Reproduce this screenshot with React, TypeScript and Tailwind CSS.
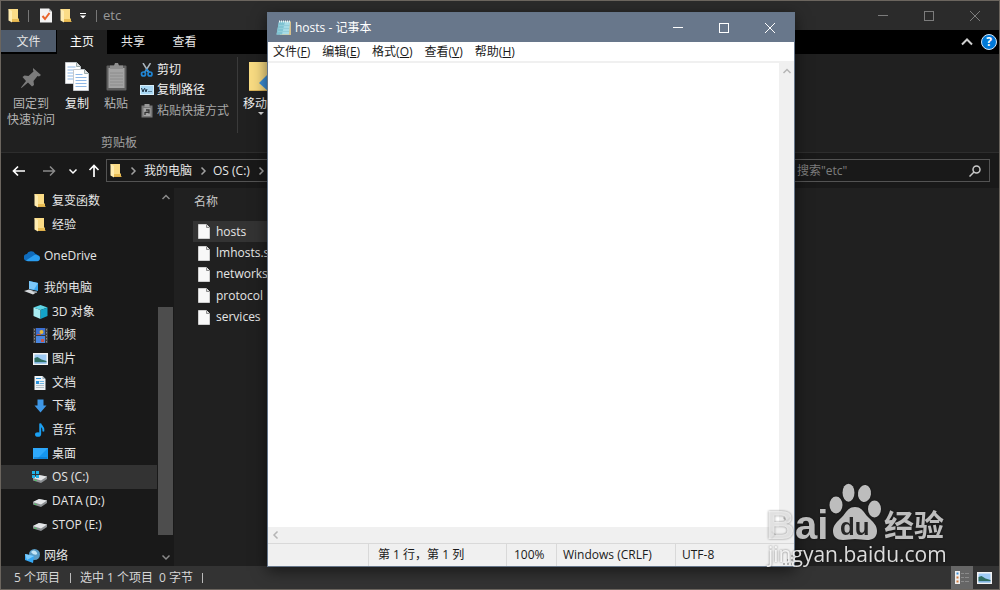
import React from 'react';

const FolderIcon = () => (
  <svg width="12" height="15" viewBox="0 0 12 15" className="shrink-0">
    <path d="M1 1h9v9l1 1v3H4z" fill="#e9bd55" />
    <path d="M0.500 1H10v10H3z" fill="#fbdc86" />
    <path d="M0.500 1L4 3v11.500L0.500 12.500z" fill="#ffecb0" />
    <path d="M4 13h7.500v1H4z" fill="#e0b04a" />
  </svg>
);

const CheckDocIcon = () => (
  <svg width="12" height="15" viewBox="0 0 12 15" className="shrink-0">
    <path d="M0 0.500h9l3 3V14.500H0z" fill="#f4f4f4" />
    <path d="M9 0.500v3h3z" fill="#b5b5b5" />
    <path d="M2.500 8l2.500 3 4.500-6" fill="none" stroke="#e8642c" strokeWidth="2" />
  </svg>
);

const FileIcon = () => (
  <svg width="12" height="15" viewBox="0 0 12 15" className="shrink-0">
    <path d="M0.500 0.500h8l3 3v11h-11z" fill="#f8f8f8" stroke="#cfcfcf" />
    <path d="M8.500 0.500v3h3" fill="#dcdcdc" stroke="#8b8b8b" />
  </svg>
);

const PinIcon = () => (
  <svg width="22" height="22" viewBox="0 0 22 22">
    <path d="M13 1l8 7-2 1.500-1.500-.5-4 5 .5 4-2 1.500-4-4L1.500 21 1 20.500 6 14 2.500 10l2-1.500 4 .5 5-4.500-.5-1.500z" fill="#7b7b7b" />
  </svg>
);

const CopyIcon = () => (
  <svg width="25" height="29" viewBox="0 0 25 29">
    <path d="M0.500 0.500h11l4 4v17h-15z" fill="#fff" stroke="#c4c8cc" />
    <path d="M11.500 0.500v4h4" fill="#ddd" stroke="#9aa" />
    <path d="M2.500 5h8M2.500 8h11M2.500 11h11M2.500 14h11M2.500 17h11" stroke="#8fb8e6" />
    <path d="M8.500 7.500h11l4 4v17h-15z" fill="#fff" stroke="#c4c8cc" />
    <path d="M19.500 7.500v4h4" fill="#ddd" stroke="#9aa" />
    <path d="M10.500 12.500h7M10.500 15.500h11M10.500 18.500h11M10.500 21.500h11M10.500 24.500h11" stroke="#8fb8e6" />
  </svg>
);

const PasteIcon = () => (
  <svg width="21" height="29" viewBox="0 0 21 29">
    <rect x="0.500" y="3.500" width="20" height="25" rx="1" fill="#5f5f5f" />
    <rect x="2.500" y="6" width="16" height="20" fill="#a3a3a3" />
    <path d="M4 11h13M4 14h13M4 17h13M4 20h13M4 23h13" stroke="#8c8c8c" />
    <path d="M4 7V3.500h4L9 1h3l1 2.500h4V7z" fill="#8d8d8d" />
  </svg>
);

const ScissorsIcon = () => (
  <svg width="14" height="14" viewBox="0 0 14 14">
    <path d="M3 0l5.500 9M10.500 0L5 9" stroke="#a9b4bd" strokeWidth="1.500" />
    <circle cx="3.500" cy="11" r="2" fill="none" stroke="#1f86d6" strokeWidth="1.700" />
    <circle cx="10" cy="11" r="2" fill="none" stroke="#1f86d6" strokeWidth="1.700" />
    <path d="M4.500 9.500L7 6.500l2.500 3" fill="none" stroke="#1f86d6" strokeWidth="1.500" />
  </svg>
);

const PathIcon = () => (
  <svg width="14" height="10" viewBox="0 0 14 10">
    <rect width="14" height="10" fill="#d6eefb" />
    <rect x="1" y="1" width="12" height="8" fill="#a9d8f5" />
    <path d="M1.500 3l1.500 4 1-3M4.500 3l1.500 4 1-3M8.500 6.500h1M10.500 6.500h1" fill="none" stroke="#1c3346" />
  </svg>
);

const ShortcutIcon = () => (
  <svg width="12" height="14" viewBox="0 0 12 14">
    <rect x="0.500" y="1.500" width="11" height="12" fill="#777" />
    <rect x="3.500" y="0" width="5" height="3" fill="#999" />
    <rect x="2.500" y="4" width="7" height="8" fill="#a5a5a5" />
    <path d="M4 11V8.500L7.500 8M5 6h3v3.500" fill="none" stroke="#333" strokeWidth="1.300" />
  </svg>
);

const MoveToIcon = () => (
  <svg width="30" height="30" viewBox="0 0 30 30">
    <rect width="30" height="29" fill="#f8db82" />
    <path d="M0 28h30v1H0z" fill="#d8b257" />
    <path d="M10 21l9-9v5h11v8H19v4z" fill="#3b8fd8" />
  </svg>
);

const CloudIcon = () => (
  <svg width="17" height="12" viewBox="0 0 17 12">
    <path d="M3.500 11A3.500 3.500 0 013 4 5 5 0 0112 3.500 3.800 3.800 0 0114 10z" fill="#0f6cbd" />
    <path d="M4 11.700l9.500-.2a3.200 3.200 0 00.500-6.400A4 4 0 0011 5L2 10.700z" fill="#2a9df0" />
  </svg>
);

const ComputerIcon = () => (
  <svg width="16" height="14" viewBox="0 0 16 14">
    <path d="M5 0l9 2v8L5 8z" fill="#3ba7f0" />
    <path d="M5 0l9 2-4 6.500L5 8z" fill="#7cc8fa" />
    <path d="M0 10l5-1.500 8 2.500-4 2.500z" fill="#d5d9dc" />
    <path d="M8 10l2 1.500 3 .5v-1.500z" fill="#8d959b" />
  </svg>
);

const CubeIcon = () => (
  <svg width="15" height="14" viewBox="0 0 15 14">
    <path d="M7.500 0l7 2.500-7 2.500-7-2.500z" fill="#5fd6e6" />
    <path d="M0.500 2.500l7 2.500v9l-7-3z" fill="#a8ecf2" />
    <path d="M14.500 2.500l-7 2.500v9l7-3z" fill="#14a3c8" />
  </svg>
);

const VideoIcon = () => (
  <svg width="15" height="15" viewBox="0 0 15 15">
    <rect width="15" height="15" fill="#3b3b3b" />
    <path d="M1.500 1v14M13.500 1v14" stroke="#8a8a8a" strokeDasharray="1.500 1.500" />
    <rect x="3" width="9" height="7" fill="#3c6fd0" />
    <rect x="3" y="8" width="9" height="7" fill="#4a86e0" />
    <circle cx="8.500" cy="4" r="2" fill="#e6b93c" />
    <path d="M4 6h4v1H4zM8 11h3v3H8z" fill="#c9584a" />
  </svg>
);

const PictureIcon = () => (
  <svg width="15" height="12" viewBox="0 0 15 12">
    <rect width="15" height="12" fill="#f2f2f2" />
    <rect x="1.500" y="1.500" width="12" height="9" fill="#9fcbf5" />
    <path d="M1.500 5l3-1 4 2.500 5 1.500v1H1.500z" fill="#2f6e62" />
    <path d="M1.500 9h12v1.500h-12z" fill="#7fb2dc" />
  </svg>
);

const DocumentIcon = () => (
  <svg width="12" height="14" viewBox="0 0 12 14">
    <path d="M0.500 0h8l3 3v11h-11z" fill="#eef3f6" />
    <path d="M8.500 0v3h3z" fill="#9fb0ba" />
    <path d="M2 9.500h8M2 11.500h8" stroke="#b3c0c8" />
    <path d="M5.500 5.500h4.500M5.500 7.500h4.500" stroke="#6fb4e0" />
    <rect x="2" y="5" width="3" height="3" fill="#2a93dd" />
    <path d="M2 2.500h5" stroke="#2a93dd" />
  </svg>
);

const DownloadIcon = () => (
  <svg width="13" height="14" viewBox="0 0 13 14">
    <path d="M3.500 0.500h6V6.500h3L6.500 13.500.5 6.500h3z" fill="#3e97e6" />
  </svg>
);

const MusicIcon = () => (
  <svg width="10" height="14" viewBox="0 0 10 14">
    <ellipse cx="3" cy="11.500" rx="3" ry="2.300" fill="#1ba0f2" />
    <path d="M5.200 11.500V0.500c.5 3 4.300 3.500 3 8" fill="none" stroke="#1ba0f2" strokeWidth="1.900" />
  </svg>
);

const DesktopIcon = () => (
  <svg width="15" height="11" viewBox="0 0 15 11">
    <rect width="15" height="11" fill="#1496f0" />
    <path d="M0 0h15L4 11H0z" fill="#2ea8fb" />
    <path d="M1 10h13" stroke="#0b6fbd" />
  </svg>
);

const DriveIcon = ({ system }: { system?: boolean }) => (
  <svg width="16" height="12" viewBox="0 0 16 12">
    <path d="M1 7l6-3 8 1.500v2.500L9 12 1 9.500z" fill="#8b8f92" />
    <path d="M1 7l6-3 8 1.500L9 9.500z" fill="#e4e6e8" />
    <path d="M2.500 9l2 .6" stroke="#3ddb5a" />
    {system && <path d="M0 0h3v3H0zM4 0h3v3H4zM0 4h3v3H0zM4 4h3v3H4z" fill="#20b4ea" />}
  </svg>
);

const NetworkIcon = () => (
  <svg width="15" height="14" viewBox="0 0 15 14">
    <circle cx="9.500" cy="5.500" r="5.500" fill="#5a9cc6" />
    <path d="M6 3c3-3 5-1 6 1s-3 3-6-1z" fill="#c5e6f6" />
    <path d="M0 5l9 2-1 7-8-3z" fill="#36a8f4" />
    <path d="M0 5l9 2-7 4z" fill="#7ccbfb" />
  </svg>
);

const NotepadIcon = () => (
  <svg width="16" height="16" viewBox="0 0 16 16">
    <path d="M4 1.500h11v13.500H4z" fill="#d8c08a" />
    <path d="M3 1.500h11l-1 13H0.500z" fill="#a7dbe6" />
    <path d="M3 1.500h6l-3 13H0.500z" fill="#7fc3d2" />
    <path d="M3 5.500h10.500M2.500 8.500h10.500M2 11.500h11" stroke="#93cdd9" />
    <path d="M3 1.500h11" stroke="#e9f4f6" strokeWidth="2" strokeDasharray="1 1" />
  </svg>
);

const Chevron = ({ d, className }: { d: string; className?: string }) => (
  <svg width="10" height="10" viewBox="0 0 10 10" fill="none" stroke="currentColor" strokeWidth="1.500" className={className}>
    <path d={d} />
  </svg>
);

const UP = 'M1.500 7L5 3.500 8.500 7';
const DOWN = 'M1.500 3.500L5 7l3.500-3.500';
const LEFT = 'M6.500 1.500L3 5l3.500 3.500';
const RIGHT = 'M3.500 1.500L7 5 3.500 8.500';

const WindowButtons = ({ className }: { className: string }) => (
  <div className={`flex h-full ${className}`}>
    <button aria-label="最小化" className="flex w-[46px] items-center justify-center">
      <svg width="10" height="10"><path d="M0 4.500h10" stroke="currentColor" /></svg>
    </button>
    <button aria-label="最大化" className="flex w-[46px] items-center justify-center">
      <svg width="10" height="10"><rect x="0.500" y="0.500" width="9" height="9" fill="none" stroke="currentColor" /></svg>
    </button>
    <button aria-label="关闭" className="flex w-[46px] items-center justify-center">
      <svg width="10" height="10"><path d="M0 0l10 10M10 0L0 10" stroke="currentColor" /></svg>
    </button>
  </div>
);

const places = [
  { name: '复变函数', icon: <FolderIcon />, row: 'pl-[31px]' },
  { name: '经验', icon: <FolderIcon />, row: 'pl-[31px]' },
  { name: 'OneDrive', icon: <CloudIcon />, row: 'pl-[23px] mt-2' },
  { name: '我的电脑', icon: <ComputerIcon />, row: 'pl-[23px] mt-2' },
  { name: '3D 对象', icon: <CubeIcon />, row: 'pl-[31px]' },
  { name: '视频', icon: <VideoIcon />, row: 'pl-[31px]' },
  { name: '图片', icon: <PictureIcon />, row: 'pl-[31px]' },
  { name: '文档', icon: <DocumentIcon />, row: 'pl-[31px]' },
  { name: '下载', icon: <DownloadIcon />, row: 'pl-[31px]' },
  { name: '音乐', icon: <MusicIcon />, row: 'pl-[31px]' },
  { name: '桌面', icon: <DesktopIcon />, row: 'pl-[31px]' },
  { name: 'OS (C:)', icon: <DriveIcon system />, row: 'pl-[31px] bg-[#333333]' },
  { name: 'DATA (D:)', icon: <DriveIcon />, row: 'pl-[31px]' },
  { name: 'STOP (E:)', icon: <DriveIcon />, row: 'pl-[31px]' },
  { name: '网络', icon: <NetworkIcon />, row: 'pl-[23px] mt-2' },
];

const files = ['hosts', 'lmhosts.sam', 'networks', 'protocol', 'services'];

const menus = [
  { name: '文件', key: 'F' },
  { name: '编辑', key: 'E' },
  { name: '格式', key: 'O' },
  { name: '查看', key: 'V' },
  { name: '帮助', key: 'H' },
];

const TitleBar = () => (
  <header className="flex h-[29px] items-center bg-[#2b2b2b] pl-[7px]">
    <FolderIcon />
    <span className="ml-2 h-3 w-px bg-[#777]" />
    <button aria-label="属性" className="ml-[11px]"><CheckDocIcon /></button>
    <button aria-label="新建文件夹" className="ml-2"><FolderIcon /></button>
    <button aria-label="自定义快速访问工具栏" className="ml-2 text-white">
      <svg width="6" height="6"><path d="M0 0.500h6" stroke="currentColor" /><path d="M0 2.500h6L3 5.500z" fill="currentColor" /></svg>
    </button>
    <span className="ml-2.5 h-3 w-px bg-[#777]" />
    <h1 className="ml-[6px] text-[13px] text-[#999]">etc</h1>
    <WindowButtons className="ml-auto mr-px text-[#7c7c7c]" />
  </header>
);

const Tabs = () => (
  <nav className="flex h-6 bg-black text-[#e6e6e6]">
    <button className="mb-0.5 w-[55px] bg-[#4f5b6b] pt-0.5">文件</button>
    <button className="ml-px w-[50px] bg-[#202020] text-white">主页</button>
    <button className="w-[52px]">共享</button>
    <button className="w-[51px]">查看</button>
    <div className="ml-auto flex items-center gap-2 pr-0.5">
      <button aria-label="最小化功能区">
        <svg width="12" height="8" fill="none" stroke="#d0d0d0" strokeWidth="2"><path d="M1 6.500L6 1.500l5 5" /></svg>
      </button>
      <button aria-label="帮助" className="flex h-4 w-4 items-center justify-center rounded-full border border-[#cfe4f7] bg-[#0078d7] font-bold leading-none text-white">?</button>
    </div>
  </nav>
);

const Ribbon = () => (
  <section className="flex h-[99px] border-b border-[#2d2d2d] bg-[#202020] pt-[3px]">
    <div className="flex w-[236px] flex-col">
      <div className="flex flex-1 pl-0.5">
        <button className="flex w-14 flex-col items-center text-[#b5b5b5]">
          <span className="flex h-[39px] items-center pt-0.5"><PinIcon /></span>
          <span>固定到</span>
          <span>快速访问</span>
        </button>
        <button className="flex w-9 flex-col items-center text-[#f0f0f0]">
          <span className="flex h-[39px] items-center"><CopyIcon /></span>
          <span>复制</span>
        </button>
        <button className="ml-[3px] flex w-9 flex-col items-center text-[#b5b5b5]">
          <span className="flex h-[39px] items-center"><PasteIcon /></span>
          <span>粘贴</span>
        </button>
        <div className="ml-1.5 flex flex-col pt-0.5">
          <button className="flex h-[21px] items-center gap-[3px] text-[#f0f0f0]"><span className="flex w-3.5 justify-center"><ScissorsIcon /></span>剪切</button>
          <button className="flex h-5 items-center gap-[3px] text-[#f0f0f0]"><span className="flex w-3.5 justify-center"><PathIcon /></span>复制路径</button>
          <button className="flex h-[21px] items-center gap-[3px] text-[#a8a8a8]"><span className="flex w-3.5 justify-center"><ShortcutIcon /></span>粘贴快捷方式</button>
        </div>
      </div>
      <p className="h-[17px] text-center text-[#a0a0a0]">剪贴板</p>
    </div>
    <span className="h-[76px] w-px bg-[#3a3a3a]" />
    <button className="flex flex-col items-center pl-[5px] text-[#f0f0f0]">
      <span className="flex h-[39px] items-center pl-1.5"><MoveToIcon /></span>
      <span>移动到</span>
      <svg width="6" height="4"><path d="M0 0h6L3 3z" fill="#ddd" /></svg>
    </button>
  </section>
);

const AddressBar = () => (
  <section className="flex h-[35px] items-center bg-[#191919] pl-[11px] pr-[9px] text-[#e6e6e6]">
    <button aria-label="返回">
      <svg width="14" height="12" fill="none" stroke="#fff" strokeWidth="1.700"><path d="M13 6H1.500M6 1.500L1.500 6 6 10.500" /></svg>
    </button>
    <button aria-label="前进" className="ml-4">
      <svg width="14" height="12" fill="none" stroke="#8a8a8a" strokeWidth="1.500"><path d="M1 6h11.500M8 1.500L12.500 6 8 10.500" /></svg>
    </button>
    <button aria-label="最近浏览的位置" className="ml-3"><Chevron d={DOWN} className="text-white" /></button>
    <button aria-label="上移" className="ml-2.5">
      <svg width="12" height="14" fill="none" stroke="#fff" strokeWidth="1.700"><path d="M6 13V1.500M1.500 6L6 1.500 10.500 6" /></svg>
    </button>
    <div className="ml-1.5 flex h-[23px] flex-1 items-center border border-[#535353] pl-[3px]">
      <FolderIcon />
      <Chevron d={RIGHT} className="ml-1.5 mr-1.5 text-[#a0a0a0]" />
      <a href="#computer">我的电脑</a>
      <Chevron d={RIGHT} className="ml-1.5 mr-[5px] text-[#a0a0a0]" />
      <a href="#os">OS (C:)</a>
      <Chevron d={RIGHT} className="ml-1.5 mr-1.5 text-[#a0a0a0]" />
      <a href="#windows">Windows</a>
    </div>
    <label className="ml-3 flex h-[23px] w-[218px] items-center border border-[#535353] pl-6 pr-2">
      <input aria-label="搜索" type="search" placeholder={'搜索"etc"'} className="min-w-0 flex-1 bg-transparent outline-none placeholder:text-[#7d7d7d]" />
      <svg width="12" height="12" fill="none" stroke="#c8c8c8" strokeWidth="1.500"><circle cx="7.500" cy="4.500" r="3.500" /><path d="M5 7L0.500 11.500" /></svg>
    </label>
  </section>
);

const Sidebar = () => (
  <aside className="flex w-[173px] overflow-hidden bg-[#191919] text-[#e6e6e6]">
    <ul className="-mb-0.5 flex flex-1 flex-col pt-px">
      {places.map((place) => (
        <li key={place.name} className={`flex flex-1 items-center ${place.row}`}>
          <a href={`#${place.name}`} className="flex items-center gap-1">
            <span className="flex w-4 justify-center">{place.icon}</span>
            {place.name}
          </a>
        </li>
      ))}
    </ul>
    <div className="flex w-[17px] flex-col items-center py-1 text-[#8a8a8a]">
      <Chevron d={UP} className="shrink-0" />
      <div className="mb-[17px] mt-auto h-[228px] w-[15px] bg-[#4d4d4d]" />
      <Chevron d={DOWN} className="shrink-0" />
    </div>
  </aside>
);

const FileList = () => (
  <main className="ml-px flex-1 pl-[18px] text-[#e6e6e6]">
    <table className="h-[140px] w-[300px] border-collapse text-left">
      <thead>
        <tr className="h-[33px]"><th className="pb-1.5 pl-px font-normal text-[#c8c8c8]">名称</th></tr>
      </thead>
      <tbody>
        {files.map((file) => (
          <tr key={file} className="first:bg-[#333333]">
            <td className="p-0">
              <span className="flex items-center gap-[6px] pl-[5px]"><FileIcon />{file}</span>
            </td>
          </tr>
        ))}
      </tbody>
    </table>
  </main>
);

const StatusBar = () => (
  <footer className="flex h-[23px] items-center bg-[#333333] pl-[13px] text-[#d6d6d6]">
    <span>5 个项目</span>
    <span className="ml-2.5 h-2.5 w-px bg-[#bbb]" />
    <span className="ml-[9px]">选中 1 个项目</span>
    <span className="ml-1.5">0 字节</span>
    <span className="ml-[9px] h-2.5 w-px bg-[#bbb]" />
    <div className="ml-auto flex h-full items-center pr-[7px]">
      <button aria-label="详细信息" className="flex h-full w-[22px] items-center justify-center bg-[#666]">
        <svg width="14" height="13">
          <rect width="5" height="13" fill="#eee" />
          <path d="M1.500 1.500h2v2h-2z" fill="#3d8fd6" /><path d="M1.500 5.500h2v2h-2zM1.500 9.500h2v2h-2z" fill="#d07a3c" />
          <path d="M6 2.500h3M10 2.500h4M6 6.500h3M10 6.500h4M6 10.500h3M10 10.500h4" stroke="#8a8a8a" />
        </svg>
      </button>
      <button aria-label="大图标" className="ml-1"><PictureIcon /></button>
    </div>
  </footer>
);

const Notepad = () => (
  <section className="absolute left-[266px] top-[11px] flex h-[555px] w-[528px] flex-col border border-[#66768a] bg-[#f0f0f0] text-[#1a1a1a] shadow-[0_4px_14px_rgba(0,0,0,0.55)]">
    <header className="flex h-[29px] items-center bg-[#68778b] pl-2 text-white">
      <NotepadIcon />
      <h2 className="ml-[3px]">hosts - 记事本</h2>
      <WindowButtons className="ml-auto mr-px" />
    </header>
    <nav className="flex h-[21px] items-center gap-3 border-b-2 border-[#f0f0f0] bg-white pl-[5px]">
      {menus.map((menu) => (
        <button key={menu.key}>{menu.name}(<u>{menu.key}</u>)</button>
      ))}
    </nav>
    <div className="flex flex-1">
      <textarea aria-label="文本编辑器" className="flex-1 resize-none bg-white outline-none" />
      <div className="flex w-[15px] flex-col items-center justify-between py-[3px] text-[#b5b5b5]">
        <Chevron d={UP} />
        <Chevron d={DOWN} />
      </div>
    </div>
    <div className="flex h-4 items-center justify-between pl-[3px] pr-4 text-[#b5b5b5]">
      <Chevron d={LEFT} />
      <Chevron d={RIGHT} />
    </div>
    <footer className="flex h-[23px] items-center border-t border-[#d9d9d9]">
      <span className="ml-[100px] flex h-full w-[138px] items-center border-l border-[#d9d9d9] pl-[9px]">第 1 行，第 1 列</span>
      <span className="flex h-full w-[50px] items-center border-l border-[#d9d9d9] pl-[7px]">100%</span>
      <span className="flex h-full w-[119px] items-center border-l border-[#d9d9d9] pl-[6px]">Windows (CRLF)</span>
      <span className="flex h-full flex-1 items-center border-l border-[#d9d9d9] pl-[6px]">UTF-8</span>
      <svg width="11" height="11" className="self-end" fill="#b0b0b0"><path d="M8 0h2v2H8zM4 4h2v2H4zM8 4h2v2H8zM0 8h2v2H0zM4 8h2v2H4zM8 8h2v2H8z" /></svg>
    </footer>
  </section>
);

const Watermark = () => (
  <div className="pointer-events-none absolute left-[765px] top-[481px] drop-shadow-[0_0_1px_rgba(0,0,0,0.6)]">
    <svg width="182" height="92" fill="#ffffff" fillOpacity="0.72">
      <text x="0" y="57" fontSize="40" className="font-['Liberation_Sans',sans-serif] font-bold">Bai</text>
      <ellipse cx="70" cy="23" rx="6.500" ry="8.500" />
      <ellipse cx="82.500" cy="10.700" rx="6" ry="9" />
      <ellipse cx="98.500" cy="11.500" rx="6.500" ry="8.500" transform="rotate(8 98.500 11.500)" />
      <ellipse cx="108.500" cy="27" rx="6.500" ry="8.500" />
      <path d="M89 25c7 0 9 6 13 10 5 5 9 8 9 14 0 7-5 9-10 9-5 0-7-1-12-1s-7 1-12 1c-6 0-10-3-10-9 0-6 4-9 9-14 4-4 6-10 13-10z" />
      <text x="74" y="53" fontSize="24" fill="#262626" fillOpacity="1" className="font-['Liberation_Sans',sans-serif] font-bold">du</text>
      <text x="118" y="54" fontSize="30" className="font-['Noto_Sans_CJK_SC',sans-serif] font-bold">经验</text>
      <text x="2" y="80" fontSize="21" fillOpacity="0.85">jingyan.baidu.com</text>
    </svg>
  </div>
);

const App = () => {
  return (
    <div className="relative flex min-h-screen flex-col overflow-hidden border border-[#6b655e] bg-[#202020] font-['Open_Sans','Noto_Sans_CJK_SC',sans-serif] text-xs">
      <TitleBar />
      <Tabs />
      <Ribbon />
      <AddressBar />
      <div className="flex flex-1">
        <Sidebar />
        <FileList />
      </div>
      <StatusBar />
      <Notepad />
      <Watermark />
    </div>
  );
};

export default App;
